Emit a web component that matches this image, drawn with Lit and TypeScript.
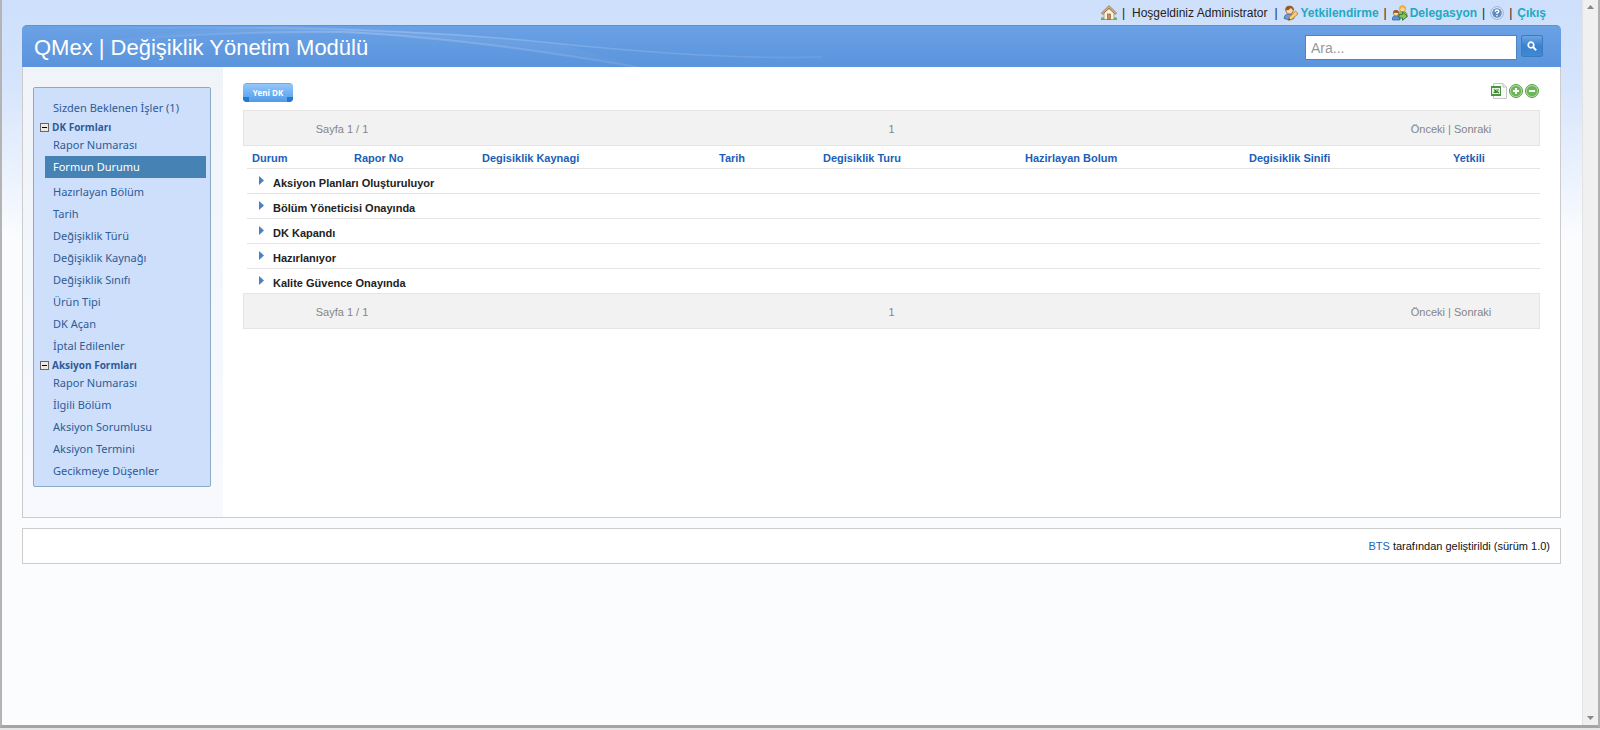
import { LitElement, html, svg, css } from "lit";
import { customElement } from "lit/decorators.js";

const homeIcon = html`<svg class="ic16" viewBox="0 0 16 16" aria-hidden="true">
  <path d="M3 8v6.500h10V8L8 3.500z" fill="#f8f3df" stroke="#a8a08a"/>
  <path d="M.8 8.800 8 1.800l7.200 7" fill="none" stroke="#8c6a45" stroke-width="2.400"/>
  <path d="M1 8.600 8 1.800l7 6.800" fill="none" stroke="#e0b684" stroke-width="1.200"/>
  <rect x="6.500" y="9" width="3" height="5.500" fill="#c98f55" stroke="#8c6238" stroke-width=".7"/>
  <path d="M0 15v-2q1.500-1.500 3 0l1 2zM16 15v-2q-1.500-1.500-3 0l-1 2z" fill="#6fae58"/>
</svg>`;
const userEditIcon = html`<svg class="ic16" viewBox="0 0 16 16" aria-hidden="true">
  <path d="M1 13.500Q1 9.500 5 9h3q3 .5 3 4.500-5 2.500-10 0z" fill="#6c9bd8" stroke="#3d6aa8" stroke-width=".8"/>
  <circle cx="6.500" cy="5.200" r="3.800" fill="#fbd9ae" stroke="#a5601c" stroke-width=".8"/>
  <path d="M2.300 5.500Q2 .8 6.500.8T11 5.500Q9 4.800 8 3 6 5.500 2.300 5.500z" fill="#9a5a24"/>
  <path d="m5.500 15.200.8-3.200 6.200-5.800 2.600 2.500L8.800 14.500z" fill="#f8cf74" stroke="#a8691c" stroke-width=".8"/>
  <path d="m5.500 15.200.5-2 1.600 1.500z" fill="#444"/>
</svg>`;
const userGoIcon = html`<svg class="ic16" viewBox="0 0 16 16" aria-hidden="true">
  <path d="M6 9q0-2.500 4.500-2.500T15 10v2H7z" fill="#9cbf58" stroke="#5f7f2d" stroke-width=".7"/>
  <circle cx="10.500" cy="3.800" r="3" fill="#fbd9ae" stroke="#c98422" stroke-width=".7"/>
  <path d="M7.200 4.200Q7 .4 10.500.4t3.300 3.800Q11 3.500 10.500 2 9 4.200 7.200 4.200z" fill="#eeb13a"/>
  <path d="M.5 15v-2.500Q1.500 10.500 4 10.500T8 12.500V15z" fill="#5a93d6" stroke="#2f62a5" stroke-width=".7"/>
  <circle cx="4" cy="8.200" r="2.700" fill="#fbd9ae" stroke="#a5601c" stroke-width=".7"/>
  <path d="M1.200 8.200Q1 5 4 5t2.800 3.200Q4 7.500 1.200 8.200z" fill="#9a5a24"/>
  <path d="M7 9.500h3.500V7l5 4.200-5 4.200V13H7z" fill="#86c06f" stroke="#2d7a1d" stroke-width=".9"/>
</svg>`;
const helpIcon = html`<svg class="ic14" viewBox="0 0 14 14" aria-hidden="true">
  <circle cx="7" cy="7" r="6.300" fill="#edf3fb" stroke="#90acd4"/>
  <circle cx="7" cy="7" r="4.800" fill="#5f8ac4"/>
  <path d="M5.200 5.700Q5.300 4 7 4t1.800 1.500Q8.800 6.400 7 7v1" fill="none" stroke="#fff" stroke-width="1.400"/>
  <rect x="6.300" y="9" width="1.400" height="1.400" fill="#fff"/>
</svg>`;
const excelIcon = html`<svg class="ic16" viewBox="0 0 16 16" aria-hidden="true">
  <path d="M2.500.5h9.500l3.500 3.500v11.500h-13z" fill="#fafafa" stroke="#c6c6c6"/>
  <path d="M12 .5V4h3.500" fill="#eee" stroke="#c6c6c6"/>
  <rect x="0" y="3" width="10" height="10" fill="#4d9440"/>
  <rect x="1" y="5" width="8" height="6" fill="#e4f2dc"/>
  <path d="M2 10 4.500 7.500 6.500 10zM5 6.500h3L7 8z" fill="#3c7d33"/>
  <path d="M3 6.500 8 10" stroke="#3c7d33" stroke-width="1.200"/>
</svg>`;
const roundIcon = (plus: boolean) => html`<svg class="ic14" viewBox="0 0 14 14" aria-hidden="true">
  <circle cx="7" cy="7" r="6.500" fill="#c4e4b8" stroke="#559a47"/>
  <circle cx="7" cy="7" r="5.300" fill="#6cb757"/>
  <rect x="4" y="6" width="6" height="2" fill="#fff"/>
  ${plus ? svg`<rect x="6" y="4" width="2" height="6" fill="#fff"/>` : ""}
</svg>`;

const dkItems = ["Rapor Numarası", "Formun Durumu", "Hazırlayan Bölüm", "Tarih", "Değişiklik Türü",
  "Değişiklik Kaynağı", "Değişiklik Sınıfı", "Ürün Tipi", "DK Açan", "İptal Edilenler"];
const actionItems = ["Rapor Numarası", "İlgili Bölüm", "Aksiyon Sorumlusu", "Aksiyon Termini", "Gecikmeye Düşenler"];
const columns = [
  ["Durum", "c1"], ["Rapor No", "c2"], ["Degisiklik Kaynagi", "c3"], ["Tarih", "c4"],
  ["Degisiklik Turu", "c5"], ["Hazirlayan Bolum", "c6"], ["Degisiklik Sinifi", "c7"], ["Yetkili", "c8"],
];
const groups = ["Aksiyon Planları Oluşturuluyor", "Bölüm Yöneticisi Onayında", "DK Kapandı", "Hazırlanıyor", "Kalite Güvence Onayında"];

@customElement("app-root")
export class AppRoot extends LitElement {
  static styles = css`
    :host {
      display: block;
      font: 11px/16px "Liberation Sans", Arial, sans-serif;
      color: #222;
      background: #e6e6e6;
      padding-bottom: 2px;
    }
    * { box-sizing: border-box; }
    a { color: inherit; text-decoration: none; }
    button { font: inherit; padding: 0; border: 0; background: none; color: inherit; cursor: pointer; }
    svg { display: block; flex: none; }
    .ic16 { width: 16px; height: 16px; }
    .ic14 { width: 14px; height: 14px; }
    .window {
      display: flex;
      min-height: calc(100vh - 2px);
      border-left: 2px solid #b4b4b4;
      border-right: 2px solid #b0b0b0;
      border-bottom: 3px solid #a4a4a4;
    }
    .page {
      flex: 1;
      min-width: 0;
      padding: 0 21px 20px 20px;
      background: #fbfcfe linear-gradient(#cddffb, #d5e4fc 80px, #fbfcfe 240px) no-repeat;
    }
    .scroll {
      width: 16px;
      display: flex;
      flex-direction: column;
      justify-content: space-between;
      align-items: center;
      padding: 5px 0;
      background: #f0f0f0;
      border-left: 1px solid #e2e2e2;
    }
    .top {
      display: flex;
      justify-content: flex-end;
      align-items: center;
      height: 25px;
      padding-right: 15px;
      gap: 5px;
      font-size: 12px;
    }
    .top a { display: flex; align-items: center; gap: 2px; font-weight: bold; color: #23a9c2; }
    .welcome { padding: 0 2px; }
    .header {
      display: flex;
      align-items: center;
      justify-content: space-between;
      position: relative;
      height: 42px;
      padding: 2px 18px 0 12px;
      border-top: 1px solid #5f92d2;
      border-radius: 5px 5px 0 0;
      background: linear-gradient(#6ba1e5, #5a94dc);
      overflow: hidden;
    }
    .swoosh { position: absolute; left: 0; top: 0; width: 800px; height: 42px; }
    h1 { position: relative; margin: 0; font-size: 22px; line-height: 28px; font-weight: normal; color: #fff; }
    .search { position: relative; display: flex; gap: 4px; }
    .search input {
      width: 212px; height: 25px; padding: 0 5px;
      border: 1px solid #4c83c4; background: #fff;
      font: 14px/20px "Liberation Sans", Arial, sans-serif; color: #333;
    }
    .search input::placeholder { color: #999; opacity: 1; }
    .search button {
      width: 22px; height: 22px;
      display: flex; align-items: center; justify-content: center;
      border: 1px solid #3b7cc0; border-radius: 2px;
      background: linear-gradient(#6ca6e2, #3a80cc 50%, #3d8ad4);
    }
    .body {
      display: flex;
      min-height: 451px;
      background: #fff;
      border: 1px solid #ccc;
      border-top: 0;
    }
    .side { width: 200px; padding: 20px 10px; background: linear-gradient(#f0f4f9, #f7f9fd); }
    .menu {
      width: 178px;
      padding: 9px 4px 4px 6px;
      border: 1px solid #8aabc4;
      border-radius: 2px;
      background: #cddffb;
      font: 11px/22px "Noto Sans", "Open Sans", sans-serif;
      color: #2f5b96;
    }
    .menu a { display: block; padding-left: 13px; }
    .menu .sub { margin-left: 5px; padding-left: 8px; }
    .menu h2 + .sub { line-height: 20px; margin-bottom: 1px; }
    .menu .on { background: #4682b4; color: #fff; margin-bottom: 3px; }
    .menu h2 { display: flex; align-items: center; gap: 3px; margin: 0; font: bold 10px/16px "Open Sans", sans-serif; }
    .box { width: 9px; height: 9px; }
    .main { flex: 1; min-width: 0; padding: 16px 20px 20px; }
    .tools { display: flex; justify-content: space-between; align-items: center; height: 19px; margin-bottom: 8px; }
    .new {
      display: block; width: 50px; height: 19px;
      border-top: 1px solid #6fa9ea; border-radius: 4px;
      font: bold 8px/18px "Open Sans", sans-serif; color: #fff;
      background:
        linear-gradient(#2279d2, #2279d2) left bottom / 6px 5px no-repeat,
        linear-gradient(#2279d2, #2279d2) right bottom / 6px 5px no-repeat,
        linear-gradient(#95c6fb, #4f9be8);
    }
    .acts { display: flex; align-items: center; gap: 2px; padding: 0 1px 4px 0; }
    .pager {
      display: grid;
      grid-template-columns: 196px 1fr 176px;
      align-items: center;
      height: 36px;
      padding-top: 2px;
      border: 1px solid #e5e5e5;
      background: #f2f2f2;
      color: #858585;
      text-align: center;
    }
    .num { padding-right: 20px; }
    table { width: calc(100% - 4px); margin-left: 4px; border-collapse: collapse; table-layout: fixed; }
    th { height: 22px; padding: 2px 0 0 5px; text-align: left; font-weight: bold; color: #1a5fb8; }
    td { height: 25px; padding: 4px 0 0 12px; font-weight: bold; color: #222; }
    tbody tr { border-top: 1px solid #e5e5e5; }
    .row { display: flex; gap: 9px; }
    .arrow { width: 5px; height: 9px; margin-top: 1px; }
    .c1 { width: 102px; } .c2 { width: 128px; } .c3 { width: 237px; } .c4 { width: 104px; }
    .c5 { width: 202px; } .c6 { width: 224px; } .c7 { width: 204px; }
    footer {
      display: flex; justify-content: flex-end; align-items: center;
      height: 36px; margin-top: 10px; padding: 0 10px;
      border: 1px solid #ccc; background: #fff; color: #111;
    }
    footer a { color: #1a5fb8; margin-right: 3px; }
  `;

  private menuLinks(items: string[]) {
    return items.map((t) => html`<a href="#" class="sub ${t === "Formun Durumu" ? "on" : ""}">${t}</a>`);
  }

  private heading(t: string) {
    return html`<h2><svg class="box" viewBox="0 0 9 9" aria-hidden="true">
      <rect x=".5" y=".5" width="8" height="8" fill="#eeeae2" stroke="#666"/><path d="M2 4.500h5" stroke="#000"/></svg>${t}</h2>`;
  }

  private pager() {
    return html`<nav class="pager"><span>Sayfa 1 / 1</span><span class="num">1</span>
      <span><a href="#">Önceki</a> | <a href="#">Sonraki</a></span></nav>`;
  }

  render() {
    return html`
      <div class="window">
        <div class="page">
          <div class="top">
            <a href="#" aria-label="Ana sayfa">${homeIcon}</a><span>|</span>
            <span class="welcome">Hoşgeldiniz Administrator</span><span>|</span>
            <a href="#">${userEditIcon}Yetkilendirme</a><span>|</span>
            <a href="#">${userGoIcon}Delegasyon</a><span>|</span>
            <a href="#" aria-label="Yardım">${helpIcon}</a><span>|</span>
            <a href="#">Çıkış</a>
          </div>
          <header class="header">
            <svg class="swoosh" viewBox="0 0 800 42" aria-hidden="true">
              <defs><linearGradient id="fade"><stop offset="0" stop-color="#fff" stop-opacity="0"/>
                <stop offset=".5" stop-color="#fff" stop-opacity=".2"/><stop offset="1" stop-color="#fff" stop-opacity=".08"/></linearGradient></defs>
              <path d="M0 5Q100 0 260 2 420 5 540 18 700 34 800 31" fill="none" stroke="url(#fade)" stroke-width="1.500"/>
              <path d="M60 18Q180 5 320 6 450 12 620 42" fill="none" stroke="url(#fade)" stroke-width="2"/>
              <path d="M60 18Q180 5 320 6 450 12 620 42L540 18Q420 4 260 0 140 4 60 18" fill="url(#fade)" opacity=".3"/>
            </svg>
            <h1>QMex | Değişiklik Yönetim Modülü</h1>
            <form class="search" @submit=${(e: Event) => e.preventDefault()}>
              <input type="text" aria-label="Ara" placeholder="Ara..." />
              <button type="submit" aria-label="Ara">
                <svg width="10" height="10" viewBox="0 0 10 10"><circle cx="4" cy="4" r="2.800" fill="none" stroke="#fff" stroke-width="1.700"/><path d="m6 6 3.200 3.200" stroke="#fff" stroke-width="2"/></svg>
              </button>
            </form>
          </header>
          <div class="body">
            <aside class="side">
              <nav class="menu">
                <a href="#">Sizden Beklenen İşler (1)</a>
                ${this.heading("DK Formları")}${this.menuLinks(dkItems)}
                ${this.heading("Aksiyon Formları")}${this.menuLinks(actionItems)}
              </nav>
            </aside>
            <main class="main">
              <div class="tools">
                <button class="new" type="button">Yeni DK</button>
                <div class="acts">
                  <button type="button" aria-label="Excel">${excelIcon}</button>
                  <button type="button" aria-label="Genişlet">${roundIcon(true)}</button>
                  <button type="button" aria-label="Daralt">${roundIcon(false)}</button>
                </div>
              </div>
              ${this.pager()}
              <table>
                <thead><tr>${columns.map(([t, c]) => html`<th class=${c}>${t}</th>`)}</tr></thead>
                <tbody>${groups.map((g) => html`<tr><td colspan="8"><div class="row">
                  <svg class="arrow" viewBox="0 0 5 9" aria-hidden="true"><path d="M0 0v9l5-4.500z" fill="#4a80c8"/></svg>${g}</div></td></tr>`)}</tbody>
              </table>
              ${this.pager()}
            </main>
          </div>
          <footer><a href="#">BTS</a><span>tarafından geliştirildi (sürüm 1.0)</span></footer>
        </div>
        <div class="scroll" aria-hidden="true">
          <svg width="7" height="4" viewBox="0 0 7 4"><path d="M0 4h7L3.500 0z" fill="#888"/></svg>
          <svg width="7" height="4" viewBox="0 0 7 4"><path d="M0 0h7L3.500 4z" fill="#888"/></svg>
        </div>
      </div>`;
  }
}
